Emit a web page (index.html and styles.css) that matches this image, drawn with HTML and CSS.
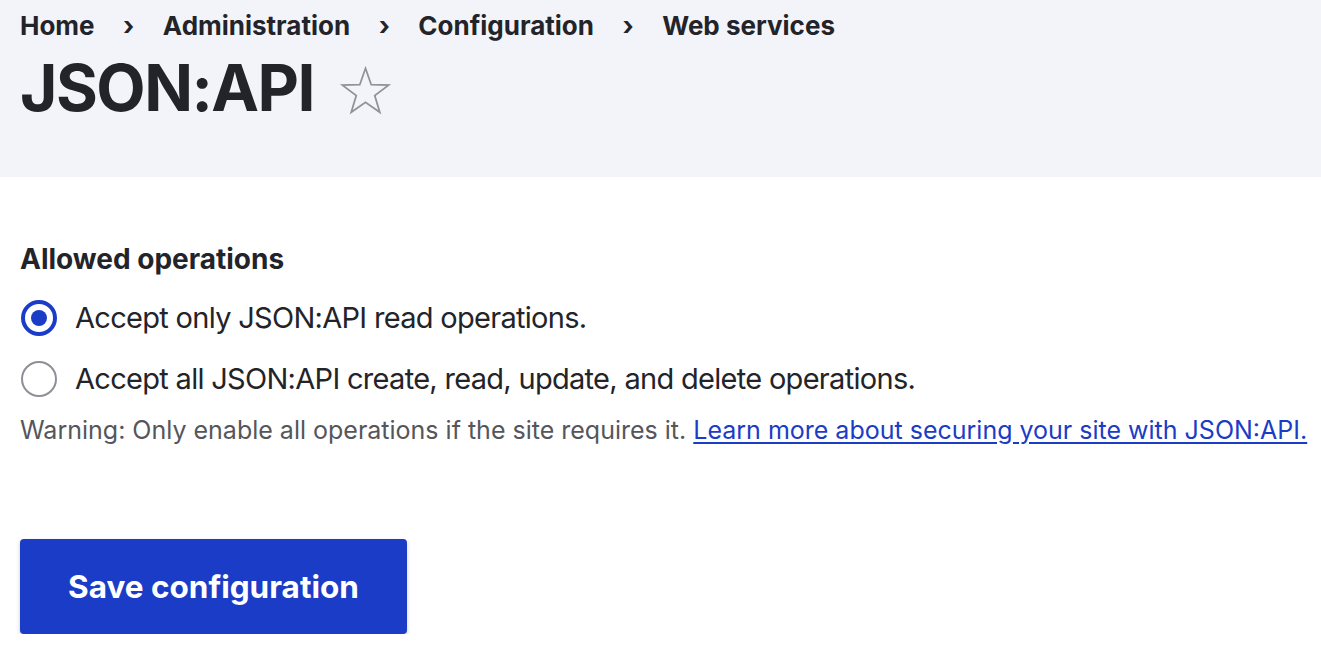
FILE: index.html
```html
<!DOCTYPE html>
<html lang="en">
<head>
<meta charset="utf-8">
<title>JSON:API</title>
<link rel="stylesheet" href="styles.css">
</head>
<body>
<header class="page-header">
  <nav class="breadcrumb">
    <a href="#" class="crumb">Home</a>
    <span class="sep">›</span>
    <a href="#" class="crumb">Administration</a>
    <span class="sep">›</span>
    <a href="#" class="crumb">Configuration</a>
    <span class="sep">›</span>
    <a href="#" class="crumb">Web services</a>
  </nav>
  <div class="title-row">
    <h1 class="title">JSON:API</h1>
    <svg class="star" viewBox="0 0 24 24" width="53" height="53" aria-hidden="true">
      <path d="M12 1.5 L14.59 8.94 L22.46 9.1 L16.18 13.86 L18.47 21.4 L12 16.9 L5.53 21.4 L7.82 13.86 L1.54 9.1 L9.41 8.94 Z" fill="none" stroke="#909298" stroke-width="0.8" stroke-linejoin="miter"/>
    </svg>
  </div>
</header>
<main class="content">
  <form class="form">
    <fieldset class="fieldset">
      <legend class="legend">Allowed operations</legend>
      <label class="option">
        <span class="radio checked"></span>
        <span class="option-label">Accept only JSON:API read operations.</span>
      </label>
      <label class="option">
        <span class="radio"></span>
        <span class="option-label">Accept all JSON:API create, read, update, and delete operations.</span>
      </label>
      <p class="description">Warning: Only enable all operations if the site requires it. <a href="#" class="link">Learn more about securing your site with JSON:API.</a></p>
    </fieldset>
    <div class="actions">
      <button type="button" class="button">Save configuration</button>
    </div>
  </form>
</main>
</body>
</html>
```

FILE: styles.css
```css
html, body {
  margin: 0;
  padding: 0;
  background: #ffffff;
  font-family: Inter, "Noto Sans", sans-serif;
  color: #232429;
}

.page-header {
  background: #f3f4f9;
  height: 177px;
  padding: 0 20px;
  box-sizing: border-box;
}

.breadcrumb {
  display: flex;
  align-items: center;
  height: 50px;
  font-size: 26px;
  font-weight: 700;
}

.crumb {
  color: #232429;
  text-decoration: none;
}

.sep {
  margin: 0 28.5px;
  font-weight: 700;
}

.title-row {
  display: flex;
  align-items: flex-start;
  gap: 25px;
  margin-top: -2px;
}

.title {
  margin: 0;
  font-size: 64px;
  font-weight: 700;
  line-height: 80px;
  letter-spacing: -1.5px;
}

.star {
  display: block;
  flex: none;
  margin-top: 17px;
}

.content {
  padding: 0 0 0 20px;
}

.form {
  padding-top: 64px;
}

.fieldset {
  border: 0;
  margin: 0;
  padding: 0;
}

.legend {
  padding: 0;
  font-size: 28px;
  font-weight: 700;
  line-height: 36px;
  margin-bottom: 10px;
}

.option {
  display: flex;
  align-items: center;
  gap: 18px;
  height: 61px;
  font-size: 29px;
  letter-spacing: -0.7px;
}

.radio {
  width: 36px;
  height: 36px;
  border-radius: 50%;
  border: 2px solid #8e9096;
  box-sizing: border-box;
  flex: none;
  margin-left: 1px;
  display: flex;
  align-items: center;
  justify-content: center;
}

.radio.checked {
  border: 4px solid #1b3cc6;
}

.radio.checked::after {
  content: "";
  width: 16px;
  height: 16px;
  border-radius: 50%;
  background: #1b3cc6;
}

.description {
  margin: 0;
  font-size: 25px;
  line-height: 42px;
  color: #55565b;
  white-space: nowrap;
}

.link {
  color: #1b3cc6;
  text-decoration: underline;
  text-underline-offset: 3px;
}

.actions {
  margin-top: 88px;
}

.button {
  background: #1b3cc6;
  color: #ffffff;
  border: 0;
  border-radius: 4px;
  font-family: Inter, "Noto Sans", sans-serif;
  font-size: 31.5px;
  font-weight: 700;
  height: 95px;
  padding: 0 48px;
  box-shadow: 0 2px 4px rgba(0, 0, 0, 0.2);
}
```
